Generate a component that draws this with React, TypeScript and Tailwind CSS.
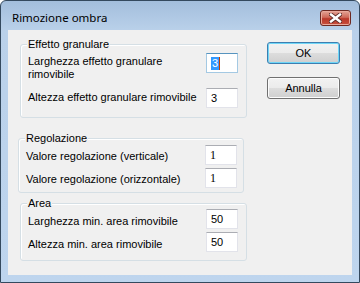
import React from "react";

const labelFont = "font-['Tahoma','Liberation_Sans',sans-serif] text-[11px] leading-[13px] text-black";

const TextBox = ({ value, focused, serif }: { value: string; focused?: boolean; serif?: boolean }) => {
  return (
    <div
      className={
        "w-[32px] h-[20px] shrink-0 bg-white border flex items-center pl-[4px] " +
        (focused ? "border-[#a4c9e3] border-t-[#5794bf]" : "border-[#e2e3ea] border-t-[#abadb3]")
      }
    >
      {focused ? (
        <span className="flex items-center">
          <span className="bg-[#3399ff] text-white px-[1px]">{value}</span>
          <span className="w-[1px] h-[13px] bg-[#c04000]" />
        </span>
      ) : (
        <span className={serif ? "font-['Liberation_Serif',serif] text-[12px]" : ""}>{value}</span>
      )}
    </div>
  );
};

const GroupBox = ({ title, className, children }: { title: string; className: string; children: React.ReactNode }) => {
  return (
    <div className={"relative border border-[#d5dfe5] rounded-[3px] shadow-[inset_1px_1px_0_#fff] " + className}>
      <span className="absolute -top-[7px] left-[6px] bg-[#f0f0f0] px-[1px]">{title}</span>
      {children}
    </div>
  );
};

const DlgButton = ({ text, isDefault }: { text: string; isDefault?: boolean }) => {
  return (
    <button
      className={
        "w-[73px] h-[22px] rounded-[3px] border bg-[linear-gradient(#f2f2f2,#ebebeb_50%,#dddddd_50%,#cfcfcf)] " +
        (isDefault
          ? "border-[#3c7fb1] shadow-[inset_0_0_0_1px_#6fd6f7]"
          : "border-[#707070] shadow-[inset_0_0_0_1px_#fcfcfc]")
      }
    >
      {text}
    </button>
  );
};

const CloseIcon = () => (
  <svg width="13" height="10" viewBox="0 0 13 10">
    <path d="M2 1.5 L11 8.5 M11 1.5 L2 8.5" stroke="#5a2a26" strokeWidth="4.2" strokeLinecap="square" />
    <path d="M2 1.5 L11 8.5 M11 1.5 L2 8.5" stroke="#fff" strokeWidth="2.4" strokeLinecap="square" />
  </svg>
);

export default function App() {
  return (
    <div className="w-[360px] h-[283px] bg-white">
      <div className="h-full flex flex-col rounded-t-[6px] border border-[#34495e] bg-[linear-gradient(#a3bedc,#bad1ea_30px,#bed5ee)]">
        <div className="h-[29px] shrink-0 flex items-start justify-between pt-[9px] pl-[11px] pr-[8px]">
          <span className="font-['Segoe_UI','Noto_Sans',sans-serif] text-[11.5px] leading-[16px] text-black">
            Rimozione ombra
          </span>
          <div className="w-[31px] h-[16px] rounded-[3px] border border-[#6d2a22] bg-[linear-gradient(#e3a496,#cf6a5a_45%,#b9382a_55%,#c8513f)] shadow-[inset_0_0_0_1px_#e9a99c] flex items-center justify-center">
            <CloseIcon />
          </div>
        </div>
        <div className={"flex-1 mx-[7px] mb-[7px] bg-[#f0f0f0] flex " + labelFont}>
          <div className="flex flex-col pt-[14px]">
            <GroupBox title="Effetto granulare" className="ml-[12px] w-[227px] h-[74px] pt-[8px] pl-[7px] pr-[8px]">
              <div className="flex justify-between items-start">
                <span className="pt-[2px]">
                  Larghezza effetto granulare
                  <br />
                  rimovibile
                </span>
                <TextBox value="3" focused />
              </div>
              <div className="flex justify-between items-start mt-[7px]">
                <span className="pt-[3px]">Altezza effetto granulare rimovibile</span>
                <TextBox value="3" />
              </div>
            </GroupBox>
            <GroupBox title="Regolazione" className="ml-[10px] mt-[20px] w-[226px] h-[55px] pt-[6px] pl-[7px] pr-[6px]">
              <div className="flex justify-between items-center">
                <span className="pt-[3px]">Valore regolazione (verticale)</span>
                <TextBox value="1" serif />
              </div>
              <div className="flex justify-between items-center mt-[3px]">
                <span className="pt-[3px]">Valore regolazione (orizzontale)</span>
                <TextBox value="1" serif />
              </div>
            </GroupBox>
            <GroupBox title="Area" className="ml-[12px] mt-[10px] w-[227px] h-[58px] pt-[5px] pl-[7px] pr-[8px]">
              <div className="flex justify-between items-center">
                <span className="pt-[4px]">Larghezza min. area rimovibile</span>
                <TextBox value="50" />
              </div>
              <div className="flex justify-between items-center mt-[3px]">
                <span className="pt-[4px]">Altezza min. area rimovibile</span>
                <TextBox value="50" />
              </div>
            </GroupBox>
          </div>
          <div className="flex flex-col gap-[13px] pt-[12px] ml-[20px]">
            <DlgButton text="OK" isDefault />
            <DlgButton text="Annulla" />
          </div>
        </div>
      </div>
    </div>
  );
}
